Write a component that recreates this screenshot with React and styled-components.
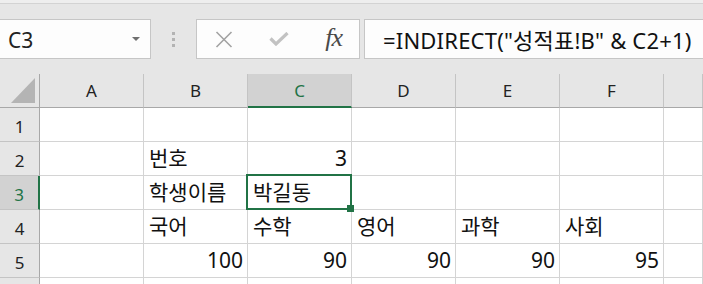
import React from "react";
import styled, { createGlobalStyle, css } from "styled-components";

const GREEN = "#217346";

const Global = createGlobalStyle`
  html, body { margin: 0; padding: 0; background: #e6e6e6; overflow: hidden; }
  #root { width: 703px; height: 284px; overflow: hidden; }
  * { box-sizing: border-box; }
`;

const Page = styled.div`
  width: 703px;
  height: 284px;
  background: #e6e6e6;
  font-family: "Noto Sans", "Noto Sans CJK KR", sans-serif;
  color: #111;
  overflow: hidden;
`;

const TopStrip = styled.div`
  height: 4px;
  background: #eeeeee;
  border-bottom: 1px solid #d3d3d3;
`;

const FormulaBar = styled.div`
  height: 70px;
  display: flex;
  align-items: flex-start;
  padding-top: 15px;
`;

const Box = styled.div`
  height: 40px;
  background: #fdfdfd;
  border: 1px solid #c6c6c6;
  display: flex;
  align-items: center;
`;

const NameBox = styled(Box)`
  width: 152px;
  margin-left: -1px;
  padding: 2px 10px 0 8px;
  justify-content: space-between;
  font-size: 21px;
  color: #222;
`;

const Arrow = styled.span`
  width: 0;
  height: 0;
  border-left: 4px solid transparent;
  border-right: 4px solid transparent;
  border-top: 4px solid #6f6f6f;
  margin-top: -3px;
`;

const Grip = styled.div`
  width: 45px;
  height: 40px;
  display: flex;
  flex-direction: column;
  align-items: center;
  justify-content: center;
  gap: 3px;
`;

const Dot = styled.span`
  width: 3px;
  height: 3px;
  background: #b3b3b3;
`;

const ButtonBox = styled(Box)`
  width: 164px;
  padding: 0 17px 0 18px;
  justify-content: space-between;
`;

const Fx = styled.span`
  font-family: "Liberation Serif", "DejaVu Serif", serif;
  font-style: italic;
  font-size: 26px;
  color: #4a4a4a;
  letter-spacing: -1px;
  margin-top: -3px;
`;

const FormulaInput = styled(Box)`
  flex: 1;
  margin-left: 4px;
  margin-right: -2px;
  padding: 0 0 1px 18px;
  font-size: 22px;
  letter-spacing: 0.2px;
  color: #111;
  white-space: nowrap;
`;

const Grid = styled.div`
  display: grid;
  grid-template-columns: 40px repeat(6, 104px) 1fr;
  grid-auto-rows: 34px;
`;

const HeaderCell = styled.div`
  background: ${(p) => (p.$active ? "#d2d2d2" : "#e6e6e6")};
  border-right: 1px solid #c4c4c4;
  border-bottom: ${(p) => (p.$active ? `2px solid ${GREEN}` : "1px solid #a8a8a8")};
  color: ${(p) => (p.$active ? GREEN : "#222")};
  font-size: 17px;
  line-height: 33px;
  text-align: center;
`;

const Corner = styled.div`
  background: #e6e6e6;
  border-right: 1px solid #a8a8a8;
  border-bottom: 1px solid #a8a8a8;
  display: flex;
`;

const RowHead = styled.div`
  background: ${(p) => (p.$active ? "#d2d2d2" : "#e6e6e6")};
  border-right: ${(p) => (p.$active ? `2px solid ${GREEN}` : "1px solid #a8a8a8")};
  border-bottom: 1px solid #c4c4c4;
  color: ${(p) => (p.$active ? GREEN : "#222")};
  font-size: 17px;
  line-height: 33px;
  padding-top: 2px;
  text-align: center;
`;

const Cell = styled.div`
  position: relative;
  background: #fff;
  border-right: 1px solid #d4d4d4;
  border-bottom: 1px solid #d4d4d4;
  font-size: 21px;
  line-height: 33px;
  white-space: nowrap;
  color: #111;
  padding: 0 4px 0 5px;
  text-align: ${(p) => (p.$num ? "right" : "left")};
  ${(p) =>
    p.$selected &&
    css`
      z-index: 2;
    `}
`;

const Selection = styled.span`
  position: absolute;
  left: -2px;
  top: -2px;
  right: -1px;
  bottom: -1px;
  border: 2px solid ${GREEN};
  pointer-events: none;
`;

const Handle = styled.span`
  position: absolute;
  right: -4px;
  bottom: -4px;
  width: 7px;
  height: 7px;
  background: ${GREEN};
`;

const cols = ["A", "B", "C", "D", "E", "F", ""];

const data = {
  2: { B: "번호", C: 3 },
  3: { B: "학생이름", C: "박길동" },
  4: { B: "국어", C: "수학", D: "영어", E: "과학", F: "사회" },
  5: { B: 100, C: 90, D: 90, E: 90, F: 95 },
};

export default function App() {
  const rows = [1, 2, 3, 4, 5, 6];
  return (
    <Page>
      <Global />
      <TopStrip />
      <FormulaBar>
        <NameBox>
          <span>C3</span>
          <Arrow />
        </NameBox>
        <Grip>
          <Dot />
          <Dot />
          <Dot />
        </Grip>
        <ButtonBox>
          <svg width="18" height="17" viewBox="0 0 18 17">
            <path d="M1.5 1 L16.5 16 M16.5 1 L1.5 16" stroke="#a3a3a3" strokeWidth="1.6" fill="none" />
          </svg>
          <svg width="20" height="14" viewBox="0 0 20 14">
            <path d="M1.5 6.5 L7 12 L18.5 1" stroke="#c2c2c2" strokeWidth="3.2" fill="none" />
          </svg>
          <Fx>fx</Fx>
        </ButtonBox>
        <FormulaInput>=INDIRECT("성적표!B" &amp; C2+1)</FormulaInput>
      </FormulaBar>
      <Grid>
        <Corner>
          <svg width="39" height="33" viewBox="0 0 39 33">
            <polygon points="35,4 11,29 35,29" fill="#b4b4b4" />
          </svg>
        </Corner>
        {cols.map((c, i) => (
          <HeaderCell key={i} $active={c === "C"}>
            {c}
          </HeaderCell>
        ))}
        {rows.map((r) => (
          <React.Fragment key={r}>
            <RowHead $active={r === 3}>{r < 6 ? r : ""}</RowHead>
            {cols.map((c, i) => {
              const v = data[r] && data[r][c];
              const sel = r === 3 && c === "C";
              return (
                <Cell key={i} $num={typeof v === "number"} $selected={sel}>
                  {v}
                  {sel && (
                    <Selection>
                      <Handle />
                    </Selection>
                  )}
                </Cell>
              );
            })}
          </React.Fragment>
        ))}
      </Grid>
    </Page>
  );
}
